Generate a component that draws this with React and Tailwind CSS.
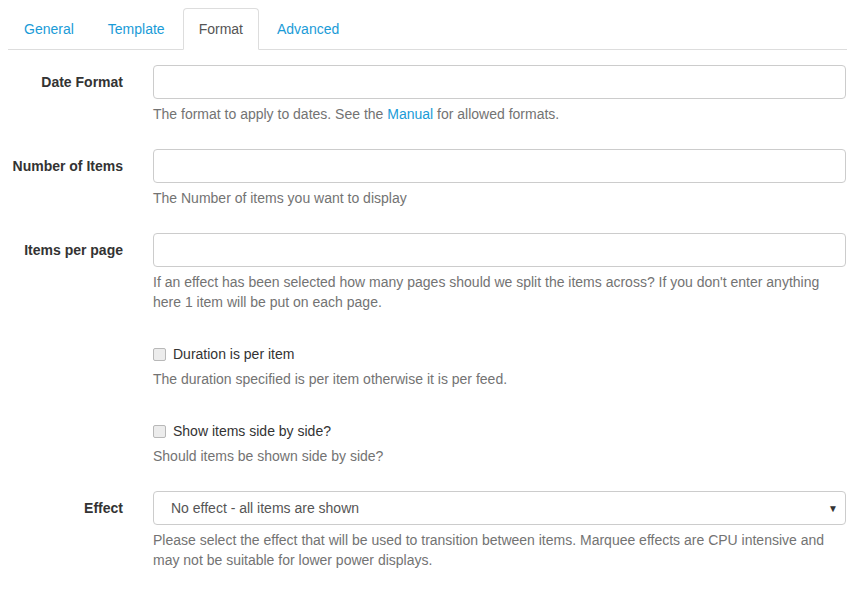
import React from 'react';

const tabs = ['General', 'Template', 'Format', 'Advanced'];

const Help = ({ children }) => (
  <p className="mt-[5px] mb-[10px] leading-5 text-[#737373]">{children}</p>
);

const Row = ({ label, children }) => (
  <div className="flex mb-[15px]">
    <label className="w-[115px] shrink-0 pt-[7px] text-right font-bold leading-5 text-[#333]">
      {label}
    </label>
    <div className="ml-[30px] flex-1 min-w-0">{children}</div>
  </div>
);

const TextInput = () => (
  <div className="h-[34px] w-full rounded border border-[#ccc] bg-white" />
);

const Check = ({ label }) => (
  <div className="pt-[7px] min-h-[27px] flex items-center leading-5">
    <span className="w-[13px] h-[13px] rounded-[2px] border border-[#b8b8b8] bg-[#ececec]" />
    <span className="ml-[7px] text-[#333]">{label}</span>
  </div>
);

export default function App() {
  return (
    <div
      className="min-h-screen bg-white pl-2 pr-[21px] pt-2 text-[14px] text-[#333]"
      style={{ fontFamily: '"Liberation Sans", Arial, sans-serif' }}
    >
      {/* Tabs */}
      <ul className="flex border-b border-[#ddd] h-[42px]">
        {tabs.map((t) => (
          <li key={t} className="mr-[2px] -mb-px">
            {t === 'Format' ? (
              <span className="block px-[15px] py-[10px] leading-5 rounded-t border border-[#ddd] border-b-white bg-white text-[#555]">
                {t}
              </span>
            ) : (
              <span className="block px-[15px] py-[10px] leading-5 border border-transparent text-[#1a9bd7]">
                {t}
              </span>
            )}
          </li>
        ))}
      </ul>

      <div className="pt-[15px] pr-px">
        <Row label="Date Format">
          <TextInput />
          <Help>
            The format to apply to dates. See the <span className="text-[#1a9bd7]">Manual</span> for allowed formats.
          </Help>
        </Row>

        <Row label="Number of Items">
          <TextInput />
          <Help>The Number of items you want to display</Help>
        </Row>

        <Row label="Items per page">
          <TextInput />
          <Help>
            If an effect has been selected how many pages should we split the items across? If you don't enter anything here 1 item will be put on each page.
          </Help>
        </Row>

        <Row label="">
          <Check label="Duration is per item" />
          <Help>The duration specified is per item otherwise it is per feed.</Help>
        </Row>

        <Row label="">
          <Check label="Show items side by side?" />
          <Help>Should items be shown side by side?</Help>
        </Row>

        <Row label="Effect">
          <div className="h-[34px] w-full rounded border border-[#ccc] bg-white flex items-center pl-[17px] pr-[7px] text-[#555]">
            <span className="flex-1">No effect - all items are shown</span>
            <span className="text-[10px] text-[#333]">▼</span>
          </div>
          <Help>
            Please select the effect that will be used to transition between items. Marquee effects are CPU intensive and may not be suitable for lower power displays.
          </Help>
        </Row>
      </div>
    </div>
  );
}
